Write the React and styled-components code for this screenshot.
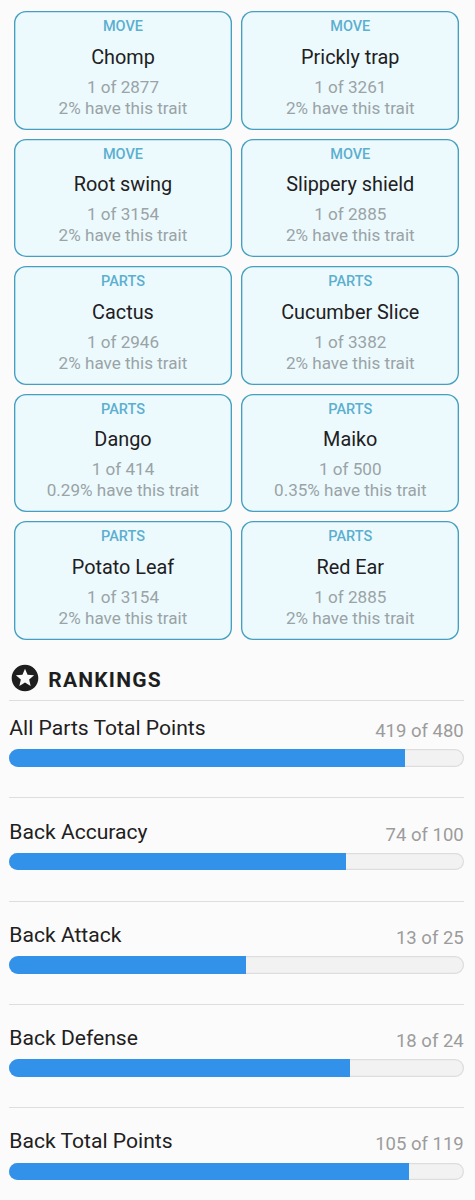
import React from "react";
import styled, { createGlobalStyle } from "styled-components";
import { MdStars } from "react-icons/md";

const GlobalStyle = createGlobalStyle`
  * { box-sizing: border-box; }
  html, body { margin: 0; padding: 0; background: #fbfbfb; }
  body { font-family: Roboto, sans-serif; color: #1e2021; }
`;

const Page = styled.main`
  width: 475px;
  height: 1200px;
  overflow: hidden;
  padding: 11.4px 11.3px 0 9.3px;
  background: #fbfbfb;
`;

const TraitGrid = styled.section`
  display: grid;
  grid-template-columns: 218px 218px;
  grid-auto-rows: 118.2px;
  gap: 9.3px;
  padding-left: 4.7px;
`;

const TraitCard = styled.article`
  display: flex;
  flex-direction: column;
  align-items: center;
  padding-top: 7px;
  border-radius: 12px;
  background: #ecfafe;
  box-shadow: inset 0 0 0 1.35px #459fc0;
  white-space: nowrap;
`;

const TraitKind = styled.div`
  font-size: 14.5px;
  font-weight: 500;
  line-height: 18px;
  color: #5cafcf;
`;

const TraitName = styled.h3`
  margin: 8.55px 0 6.05px;
  font-size: 19.85px;
  font-weight: 400;
  line-height: 26px;
`;

const TraitStat = styled.div`
  font-size: 17.1px;
  line-height: 21px;
  color: #9aa3a5;
`;

const SectionHeader = styled.header`
  display: flex;
  align-items: center;
  height: 47px;
  margin-top: 14px;
  padding-top: 2px;
  color: #1e1e1e;
  border-bottom: 1px solid #dedede;
`;

const SectionTitle = styled.h2`
  margin: 5px 0 0 7px;
  font-size: 21px;
  font-weight: 700;
  line-height: 28px;
  letter-spacing: 1.2px;
`;

const RankRow = styled.article`
  height: 103.2px;
  padding-top: 19.1px;

  & + & { border-top: 1px solid #dedede; }
  &:first-of-type { height: 96.9px; padding-top: 13.3px; }
`;

const RankHeading = styled.div`
  display: flex;
  align-items: baseline;
  justify-content: space-between;
  height: 35.6px;
`;

const RankLabel = styled.span`
  font-size: 21.1px;
  line-height: 28px;
`;

const RankValue = styled.span`
  position: relative;
  top: 2px;
  font-size: 18.5px;
  color: #9c9c9c;
`;

const Track = styled.div`
  height: 17.3px;
  border-radius: 9px;
  overflow: hidden;
  background: #f2f2f2;
  box-shadow: inset 0 0 0 1.2px #dddddd;
`;

const Fill = styled.div`
  height: 100%;
  background: #3291e9;
`;

const traits = [
  ["MOVE", "Chomp", "2877", "2%"],
  ["MOVE", "Prickly trap", "3261", "2%"],
  ["MOVE", "Root swing", "3154", "2%"],
  ["MOVE", "Slippery shield", "2885", "2%"],
  ["PARTS", "Cactus", "2946", "2%"],
  ["PARTS", "Cucumber Slice", "3382", "2%"],
  ["PARTS", "Dango", "414", "0.29%"],
  ["PARTS", "Maiko", "500", "0.35%"],
  ["PARTS", "Potato Leaf", "3154", "2%"],
  ["PARTS", "Red Ear", "2885", "2%"],
];

const rankings = [
  ["All Parts Total Points", 419, 480],
  ["Back Accuracy", 74, 100],
  ["Back Attack", 13, 25],
  ["Back Defense", 18, 24],
  ["Back Total Points", 105, 119],
];

export default function App() {
  return (
    <Page>
      <GlobalStyle />
      <TraitGrid>
        {traits.map(([kind, name, count, share]) => (
          <TraitCard key={name}>
            <TraitKind>{kind}</TraitKind>
            <TraitName>{name}</TraitName>
            <TraitStat>{`1 of ${count}`}</TraitStat>
            <TraitStat>{`${share} have this trait`}</TraitStat>
          </TraitCard>
        ))}
      </TraitGrid>
      <SectionHeader>
        <MdStars size={32} />
        <SectionTitle>RANKINGS</SectionTitle>
      </SectionHeader>
      <section>
        {rankings.map(([label, value, max]) => (
          <RankRow key={label}>
            <RankHeading>
              <RankLabel>{label}</RankLabel>
              <RankValue>{`${value} of ${max}`}</RankValue>
            </RankHeading>
            <Track>
              <Fill style={{ width: `${Math.round((value / max) * 100)}%` }} />
            </Track>
          </RankRow>
        ))}
      </section>
    </Page>
  );
}
